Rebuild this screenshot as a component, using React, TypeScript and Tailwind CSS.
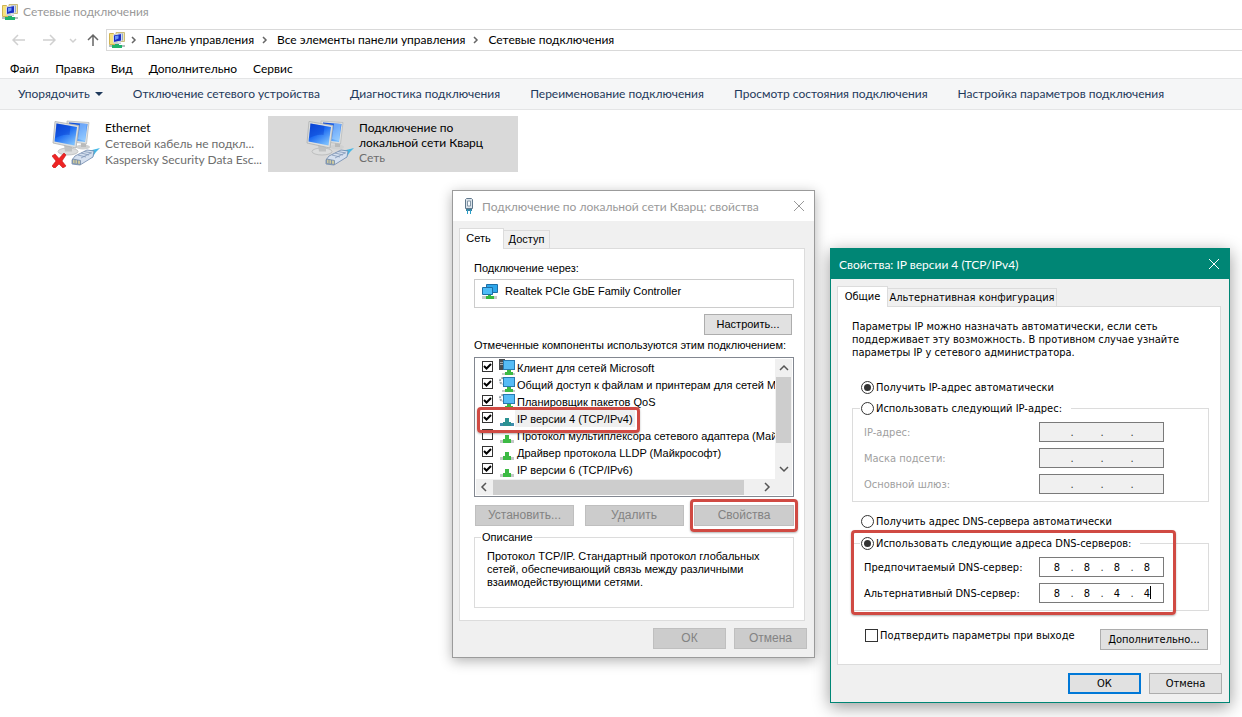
import { useState } from 'react'
import type { ReactNode } from 'react'

const SEGOE = "font-['Lato','Noto_Sans',sans-serif]"

const crumbs = ['Панель управления', 'Все элементы панели управления', 'Сетевые подключения']
const menu = ['Файл', 'Правка', 'Вид', 'Дополнительно', 'Сервис']
const commands = [
  'Отключение сетевого устройства',
  'Диагностика подключения',
  'Переименование подключения',
  'Просмотр состояния подключения',
  'Настройка параметров подключения',
]

type Kind = 'client' | 'service' | 'protocol'

const components: { name: string; kind: Kind; on: boolean; selected?: boolean }[] = [
  { name: 'Клиент для сетей Microsoft', kind: 'client', on: true },
  { name: 'Общий доступ к файлам и принтерам для сетей Microsoft', kind: 'service', on: true },
  { name: 'Планировщик пакетов QoS', kind: 'service', on: true },
  { name: 'IP версии 4 (TCP/IPv4)', kind: 'protocol', on: true, selected: true },
  { name: 'Протокол мультиплексора сетевого адаптера (Майкрософт)', kind: 'protocol', on: false },
  { name: 'Драйвер протокола LLDP (Майкрософт)', kind: 'protocol', on: true },
  { name: 'IP версии 6 (TCP/IPv6)', kind: 'protocol', on: true },
]

function FolderIcon() {
  return (
    <svg viewBox="0 0 16 16" className="size-4 shrink-0">
      <path d="M.5 1.500h4l1 1H8v10H.5z" fill="#f5e27f" stroke="#d0b352" />
      <path d="M7 .5h8.500v9H7z" fill="#f3eab0" stroke="#c9bb7c" />
      <path d="M9 1.500h5v7H9z" fill="#8ea6d8" />
      <path d="M4.500 3l8-1.500v7.500l-8 1.500z" fill="#1a2fc4" stroke="#d5dbe8" />
      <path d="M6 4l3.500-.6v3L6 8z" fill="#6c97f4" />
      <path d="M5 10.500h7V12H5z" fill="#c9ccd4" />
      <path d="M0 13h16v2H0z" fill="#b4bfc0" />
      <path d="M6 12h4v1h3v3H3v-3h3z" fill="#20b26b" />
    </svg>
  )
}

function ConnectionIcon({ id, broken }: { id: string; broken?: boolean }) {
  return (
    <svg viewBox="0 0 48 48" className="size-12 shrink-0">
      <defs>
        <linearGradient id={id} x1="0" y1="0" x2=".7" y2="1">
          <stop offset="0" stopColor="#0b45d6" />
          <stop offset=".5" stopColor="#1d6cf2" />
          <stop offset="1" stopColor="#79bdfd" />
        </linearGradient>
      </defs>
      <ellipse cx="31" cy="27" rx="7" ry="2.500" fill="#d0d1d1" />
      <path d="M29 22h5v5h-5z" fill="#b9baba" />
      <path d="M15 1l22 1.500L34.500 24 15 21z" fill="#dfe1e1" stroke="#b4b7b7" strokeWidth=".7" />
      <path d="M17 2.500l18.500 1.500-2.500 18-16-2z" fill={`url(#${id})`} />
      <path d="M28 3.500l7 .6-2 17-7-2z" fill="#a9d6ff" opacity=".6" />
      <ellipse cx="16" cy="31.500" rx="10" ry="3.500" fill="#dcdddd" stroke="#b0b2b2" strokeWidth=".7" />
      <path d="M12 25l8 1.500v5h-7z" fill="#c0c2c2" />
      <path d="M3 1.500l24 4L24 28 1 23z" fill="#dddfdf" stroke="#adb0b0" strokeWidth=".8" />
      <path d="M4.500 3.500l20.500 3.500L22.500 25.500 2.500 21.500z" fill={`url(#${id})`} />
      <path d="M4.500 3.500l14 2.500-1 9c-5-1-10 1-14 3z" fill="#083acb" opacity=".4" />
      <path d="M36 31l12-3-4 4-4 6-4-1z" fill="#45b8e6" />
      <path d="M20 40l3-4 12-6 7 1-1 6-13 8-8-1z" fill="#d5e0ef" stroke="#6f88ab" strokeWidth=".8" />
      <path d="M26 35l8 2M29 33l8 2M32 31.500l8 1.500M29 38l10-5" stroke="#7f95b6" strokeWidth=".8" fill="none" />
      <path d="M20.500 39l8 1.500v4l-8-1z" fill="#cdc99f" stroke="#6f88ab" strokeWidth=".8" />
      <path d="M23 39.500v4M25.500 40v4" stroke="#6f88ab" strokeWidth=".8" />
      {broken && (
        <path
          d="M0 36l3-2 4 4.500L12 33l2 2-4 6 4 5-3 2-4-4-4.500 4.500L0 46l4-5z"
          fill="#ee2424"
          stroke="#c81414"
          strokeWidth=".6"
        />
      )}
    </svg>
  )
}

function AdapterIcon() {
  return (
    <svg viewBox="0 0 18 18" className="size-[18px] shrink-0">
      <path d="M5.500 1.500h11v8h-11z" fill="#2ea6ea" stroke="#1d6ea6" />
      <path d="M1.500 4.500h10v7h-10z" fill="#4dbcf7" stroke="#1d6ea6" />
      <path d="M1 13h15v3H1z" fill="#c6caca" />
      <path d="M7 12h3v1h3v3H5v-3h2z" fill="#36b83f" />
    </svg>
  )
}

function PlugIcon() {
  return (
    <svg viewBox="0 0 12 18" className="w-3 h-[18px] shrink-0">
      <path d="M2.500 2.500l1-1h5l1 1v9h-7z" fill="#dbe3ea" stroke="#60788c" />
      <path d="M4.500 4h3v5h-3z" fill="#f7fafc" stroke="#8496a6" />
      <path d="M3 12h6v2H3z" fill="#3d7f9c" />
      <path d="M4 13h1v4H4zM7 13h1v4H7z" fill="#2b9fc9" />
    </svg>
  )
}

function ComponentIcon({ kind, selected }: { kind: Kind; selected?: boolean }) {
  return (
    <svg viewBox="0 0 16 17" className="w-4 h-[17px] shrink-0" shapeRendering="crispEdges">
      {kind !== 'protocol' && <path d="M3 14h13v2H3z" fill="#c4c8c8" />}
      {kind === 'protocol' && <path d="M1 13h14v3H1z" fill={selected ? '#3f8dae' : '#c4c8c8'} />}
      {kind === 'client' && <path d="M0 0h6v11H0z" fill="#4a4d50" />}
      {kind === 'client' && <path d="M1 3h3v1H1zM1 5h3v1H1z" fill="#a5aaad" />}
      {kind === 'service' && (
        <circle cx="4" cy="5" r="3" fill="none" stroke="#9aa2a8" strokeWidth="2" strokeDasharray="2 1" shapeRendering="auto" />
      )}
      {kind !== 'protocol' && <path d="M4 1h12v10H4z" fill="#2879b0" />}
      {kind !== 'protocol' && <path d="M5 2h10v8H5z" fill="#56bcf6" />}
      <path
        d={kind === 'protocol' ? 'M6 8h4v4h2v4H4v-4h2z' : 'M8 11h4v2h2v3H6v-3h2z'}
        fill={selected ? '#2b9292' : '#3cba44'}
      />
    </svg>
  )
}

function CloseIcon() {
  return (
    <svg viewBox="0 0 12 12" className="size-3" fill="none" stroke="currentColor">
      <path d="M1 1l10 10M11 1L1 11" />
    </svg>
  )
}

function Chevron({ d, className }: { d: string; className?: string }) {
  return (
    <svg viewBox="0 0 10 10" className={`size-[10px] shrink-0 ${className ?? ''}`} fill="none" stroke="currentColor" strokeWidth="1.500">
      <path d={d} />
    </svg>
  )
}

function Arrow({ d, label, className }: { d: string; label: string; className: string }) {
  return (
    <button aria-label={label} className={className}>
      <svg viewBox="0 0 14 14" className="size-[14px]" fill="none" stroke="currentColor" strokeWidth="1.500">
        <path d={d} />
      </svg>
    </button>
  )
}

function Button({ children, disabled, primary, className = '' }: {
  children: ReactNode
  disabled?: boolean
  primary?: boolean
  className?: string
}) {
  const look = disabled
    ? 'border border-[#bfbfbf] bg-[#cccccc] text-[#838383]'
    : primary
      ? 'border-2 border-[#0078d7] bg-[#e1e1e1]'
      : 'border border-[#adadad] bg-[#e1e1e1]'
  return (
    <button disabled={disabled} className={`h-[21px] flex items-center justify-center ${look} ${className}`}>
      {children}
    </button>
  )
}

function Radio({ name, label, checked, onChange }: {
  name: string
  label: string
  checked: boolean
  onChange: () => void
}) {
  return (
    <label className="flex items-center gap-[2px] h-[14px]">
      <input
        type="radio"
        name={name}
        checked={checked}
        onChange={onChange}
        className="appearance-none grid place-content-center size-[13px] shrink-0 rounded-full border border-[#333333] bg-white checked:before:content-[''] checked:before:size-[7px] checked:before:rounded-full checked:before:bg-[#333333]"
      />
      {label}
    </label>
  )
}

function IpRow({ label, value, disabled, caret }: {
  label: string
  value: string[]
  disabled?: boolean
  caret?: boolean
}) {
  return (
    <div role="group" aria-label={label} className="flex items-center justify-between h-5">
      <span className={disabled ? 'text-[#a0a0a0]' : ''}>{label}</span>
      <div className={`relative flex items-center w-[125px] h-5 pl-1 border border-[#7a7a7a] ${disabled ? 'bg-[#f0f0f0]' : 'bg-white'}`}>
        {value.map((v, i) => (
          <div key={i} className="flex items-center">
            {i > 0 && <span className="w-1 text-center text-[#333333]">.</span>}
            <input
              aria-label={`${label} ${i + 1}`}
              defaultValue={v}
              disabled={disabled}
              className="w-[26px] h-4 text-center bg-transparent outline-none"
            />
          </div>
        ))}
        {caret && <span className="absolute right-3 top-[2px] w-px h-[13px] bg-black" />}
      </div>
    </div>
  )
}

function ConnectionDialog() {
  const [checks, setChecks] = useState(components.map(c => c.on))

  return (
    <section className="absolute left-[452px] top-[190px] w-[363px] flex flex-col border border-[#9b9b9b] bg-[#f0f0f0] shadow-[0_3px_12px_rgba(0,0,0,0.3)] font-['Liberation_Sans',Arial,sans-serif] text-[11px] leading-[13px] text-black">
      <header className={`flex items-center h-[30px] pl-2.5 pr-[9px] bg-white text-[#999999] text-[12px] ${SEGOE}`}>
        <PlugIcon />
        <h2 className="flex-1 pl-[7px] whitespace-nowrap">Подключение по локальной сети Кварц: свойства</h2>
        <button aria-label="Закрыть"><CloseIcon /></button>
      </header>

      <div className="pl-[6px] pr-[9px] pt-[7px]">
        <div role="tablist" className="flex items-end h-5">
          <button role="tab" aria-selected className="relative z-10 w-[45px] h-[21px] -mb-px border border-b-0 border-[#dcdcdc] bg-white pr-[6px] pb-[2px]">Сеть</button>
          <button role="tab" className="w-[46px] h-[18px] border border-l-0 border-b-0 border-[#dcdcdc] bg-[#f0f0f0]">Доступ</button>
        </div>

        <div className="border border-[#dcdcdc] bg-white pl-[14px] pr-[10px] pt-[13px] pb-3">
          <p>Подключение через:</p>
          <div className="mt-1 flex gap-[6px] h-[29px] px-[6px] pt-[3px] border border-[#cccccc]">
            <AdapterIcon />
            <span className="pt-[2px]">Realtek PCIe GbE Family Controller</span>
          </div>
          <Button className="mt-[6px] ml-auto mr-[2px] w-[88px]">Настроить...</Button>

          <p className="mt-1 whitespace-nowrap">Отмеченные компоненты используются этим подключением:</p>
          <div className="relative mt-[5px] border border-[#828790] p-px">
            <div className="flex">
              <ul className="flex-1 h-[120px] overflow-hidden pl-[6px]">
                {components.map((c, i) => (
                  <li key={c.name}>
                    <label className="flex items-start h-[17px] whitespace-nowrap">
                      <span className="grid shrink-0 mt-[2px] mr-[6px]">
                        <input
                          type="checkbox"
                          checked={checks[i]}
                          onChange={() => setChecks(checks.map((v, j) => (j === i ? !v : v)))}
                          className="peer col-start-1 row-start-1 appearance-none size-[11px] border border-[#333333] bg-white"
                        />
                        <svg viewBox="0 0 11 11" className="hidden peer-checked:block pointer-events-none col-start-1 row-start-1 size-[11px]" fill="none" stroke="#000" strokeWidth="2">
                          <path d="M2 5l2.500 2.500L9 3" />
                        </svg>
                      </span>
                      <ComponentIcon kind={c.kind} selected={c.selected} />
                      <span className={`h-[17px] leading-[18px] px-[2px] ${c.selected ? 'bg-[#f0f0f0]' : ''}`}>{c.name}</span>
                    </label>
                  </li>
                ))}
              </ul>
              <div className="w-[17px] flex flex-col items-center bg-[#f0f0f0] text-[#555555]">
                <Chevron d="M1 7l4-4 4 4" className="my-[4px]" />
                <div className="w-[15px] h-[66px] bg-[#cdcdcd]" />
                <Chevron d="M1 3l4 4 4-4" className="mt-auto mb-[5px]" />
              </div>
            </div>
            <div className="flex items-center h-4 bg-[#f0f0f0] text-[#555555]">
              <Chevron d="M7 1L3 5l4 4" className="ml-[3px] mr-[4px]" />
              <div className="w-[251px] h-[15px] bg-[#cdcdcd]" />
              <Chevron d="M3 1l4 4-4 4" className="ml-[18px]" />
            </div>
            <div className="absolute left-[2px] top-[49px] w-[163px] h-[26px] border-3 border-[#d04a43] rounded-[4px] shadow-[0_1px_2px_rgba(0,0,0,0.3)] pointer-events-none" />
          </div>

          <div className="mt-2 flex justify-between pl-px text-[12px]">
            <Button disabled className="w-[99px]">Установить...</Button>
            <Button disabled className="w-[99px]">Удалить</Button>
            <div className="relative">
              <Button disabled className="w-[100px]">Свойства</Button>
              <div className="absolute -inset-x-1 -inset-y-[6px] border-3 border-[#d04a43] rounded-[4px] shadow-[0_1px_2px_rgba(0,0,0,0.3)] pointer-events-none" />
            </div>
          </div>

          <fieldset className="mt-[5px] h-[77px] border border-[#dcdcdc] px-3 pt-[6px]">
            <legend className="-ml-[6px] px-px">Описание</legend>
            <p>
              Протокол TCP/IP. Стандартный протокол глобальных сетей, обеспечивающий связь между различными взаимодействующими сетями.
            </p>
          </fieldset>
        </div>
      </div>

      <footer className="flex justify-end gap-2 pt-[7px] pr-[7px] pb-2 text-[12px]">
        <Button disabled className="w-[73px]">ОК</Button>
        <Button disabled className="w-[73px]">Отмена</Button>
      </footer>
    </section>
  )
}

function TcpDialog() {
  const [autoIp, setAutoIp] = useState(true)
  const [autoDns, setAutoDns] = useState(false)
  const empty = ['', '', '', '']

  return (
    <section className="absolute left-[830px] top-[248px] w-[400px] flex flex-col border border-[#008675] bg-[#f0f0f0] shadow-[0_4px_16px_rgba(0,0,0,0.4)] font-['DejaVu_Sans_Condensed','DejaVu_Sans',Tahoma,sans-serif] text-[11px] leading-[13px] text-black">
      <header className={`flex items-center h-[30px] pl-2 pr-[9px] bg-[#008675] text-white text-[12px] ${SEGOE}`}>
        <h2 className="flex-1">Свойства: IP версии 4 (TCP/IPv4)</h2>
        <button aria-label="Закрыть"><CloseIcon /></button>
      </header>

      <div className="pl-[6px] pr-2 pt-[7px]">
        <div role="tablist" className="flex items-end h-5">
          <button role="tab" aria-selected className="relative z-10 w-[51px] h-[21px] -mb-px border border-b-0 border-[#dcdcdc] bg-white pb-[2px]">Общие</button>
          <button role="tab" className="w-[169px] h-[18px] border border-l-0 border-b-0 border-[#dcdcdc] bg-[#f0f0f0] whitespace-nowrap">Альтернативная конфигурация</button>
        </div>

        <div className="border border-[#dcdcdc] bg-white pl-[14px] pr-[11px] pt-[13px] pb-[14px]">
          <p className="pr-5">
            Параметры IP можно назначать автоматически, если сеть поддерживает эту возможность. В противном случае узнайте параметры IP у сетевого администратора.
          </p>

          <div className="mt-[21px] pl-[9px]">
            <Radio name="ip" label="Получить IP-адрес автоматически" checked={autoIp} onChange={() => setAutoIp(true)} />
          </div>
          <fieldset className="mt-[7px] border border-[#dcdcdc] pl-[11px] pr-11 pt-[7px] pb-[7px]">
            <legend className="-ml-1 pl-px pr-[9px]">
              <Radio name="ip" label="Использовать следующий IP-адрес:" checked={!autoIp} onChange={() => setAutoIp(false)} />
            </legend>
            <div className="flex flex-col gap-[6px]">
              <IpRow label="IP-адрес:" value={empty} disabled />
              <IpRow label="Маска подсети:" value={empty} disabled />
              <IpRow label="Основной шлюз:" value={empty} disabled />
            </div>
          </fieldset>

          <div className="mt-[12px] pl-[9px]">
            <Radio name="dns" label="Получить адрес DNS-сервера автоматически" checked={autoDns} onChange={() => setAutoDns(true)} />
          </div>
          <div className="relative mt-2">
            <fieldset className="border border-[#dcdcdc] pl-[11px] pr-11 pt-[7px] pb-[7px]">
              <legend className="-ml-1 pl-px pr-[9px]">
                <Radio name="dns" label="Использовать следующие адреса DNS-серверов:" checked={!autoDns} onChange={() => setAutoDns(false)} />
              </legend>
              <div className="flex flex-col gap-[6px]">
                <IpRow label="Предпочитаемый DNS-сервер:" value={['8', '8', '8', '8']} />
                <IpRow label="Альтернативный DNS-сервер:" value={['8', '8', '4', '4']} caret />
              </div>
            </fieldset>
            <div className="absolute -left-px right-[33px] -top-[6px] -bottom-1 border-3 border-[#d04a43] rounded-[4px] shadow-[0_1px_2px_rgba(0,0,0,0.3)] pointer-events-none" />
          </div>

          <div className="mt-[18px] flex items-start justify-between pl-[13px] pr-px">
            <label className="flex items-center gap-[2px]">
              <input type="checkbox" className="appearance-none size-[13px] border border-[#333333] bg-white checked:bg-[#333333]" />
              Подтвердить параметры при выходе
            </label>
            <Button className="w-[108px]">Дополнительно...</Button>
          </div>
        </div>
      </div>

      <footer className="flex justify-end gap-2 pt-2 pr-[7px] pb-2">
        <Button primary className="w-[73px]">ОК</Button>
        <Button className="w-[73px]">Отмена</Button>
      </footer>
    </section>
  )
}

export default function App() {
  return (
    <div className={`relative min-h-screen overflow-hidden bg-white text-black text-[12px] leading-4 ${SEGOE}`}>
      <header className="flex items-center gap-[5px] h-6 px-[2px] text-[#999999]">
        <FolderIcon />
        <h1>Сетевые подключения</h1>
      </header>

      <nav aria-label="Адрес" className="flex items-center h-8 pl-3">
        <Arrow label="Назад" className="w-[30px] text-[#d0d0d0]" d="M13 7H1M6 2L1 7l5 5" />
        <Arrow label="Вперёд" className="w-[26px] text-[#d0d0d0]" d="M1 7h12M8 2l5 5-5 5" />
        <Chevron d="M2 4l3 3 3-3" className="text-[#d0d0d0]" />
        <Arrow label="Вверх" className="ml-2 w-5 text-[#666666]" d="M7 13V2M2 7l5-5 5 5" />
        <ol className="flex-1 flex items-center h-[22px] pl-[2px] border border-r-0 border-[#d9d9d9] whitespace-nowrap">
          <li><FolderIcon /></li>
          {crumbs.map(c => (
            <li key={c} className="flex items-center">
              <Chevron d="M3 2l3 3-3 3" className="ml-1 mr-[7px] text-[#666666]" />
              <a href="#" className="pr-[2px]">{c}</a>
            </li>
          ))}
        </ol>
      </nav>

      <div role="menubar" className="flex items-center gap-4 h-[22px] pt-[4px] pl-2.5">
        {menu.map(m => <button role="menuitem" key={m}>{m}</button>)}
      </div>

      <div role="toolbar" className="flex items-center h-8 pl-[18px] gap-[30px] border-y border-[#e4e5e6] bg-[#f5f6f7] text-[#1e395b] whitespace-nowrap">
        <button className="flex items-center gap-[5px]">
          Упорядочить
          <svg viewBox="0 0 8 4" className="w-2 h-1"><path d="M0 0h8L4 4z" fill="currentColor" /></svg>
        </button>
        {commands.map(c => <button key={c}>{c}</button>)}
      </div>

      <main className="flex gap-1 pt-[6px] pl-[14px]">
        <article className="flex w-[250px] h-14 pl-[38px] pt-[4px] gap-[5px]">
          <ConnectionIcon id="eth" broken />
          <div className="whitespace-nowrap">
            <h2>Ethernet</h2>
            <p className="text-[#6d6d6d]">Сетевой кабель не подкл...</p>
            <p className="text-[#6d6d6d]">Kaspersky Security Data Esc...</p>
          </div>
        </article>
        <article className="flex w-[250px] h-14 pl-[38px] pt-[4px] gap-[5px] bg-[#d9d9d9]">
          <ConnectionIcon id="lan" />
          <div>
            <h2 className="leading-[15px]">Подключение по<br />локальной сети Кварц</h2>
            <p className="text-[#6d6d6d]">Сеть</p>
          </div>
        </article>
      </main>

      <ConnectionDialog />
      <TcpDialog />
    </div>
  )
}
